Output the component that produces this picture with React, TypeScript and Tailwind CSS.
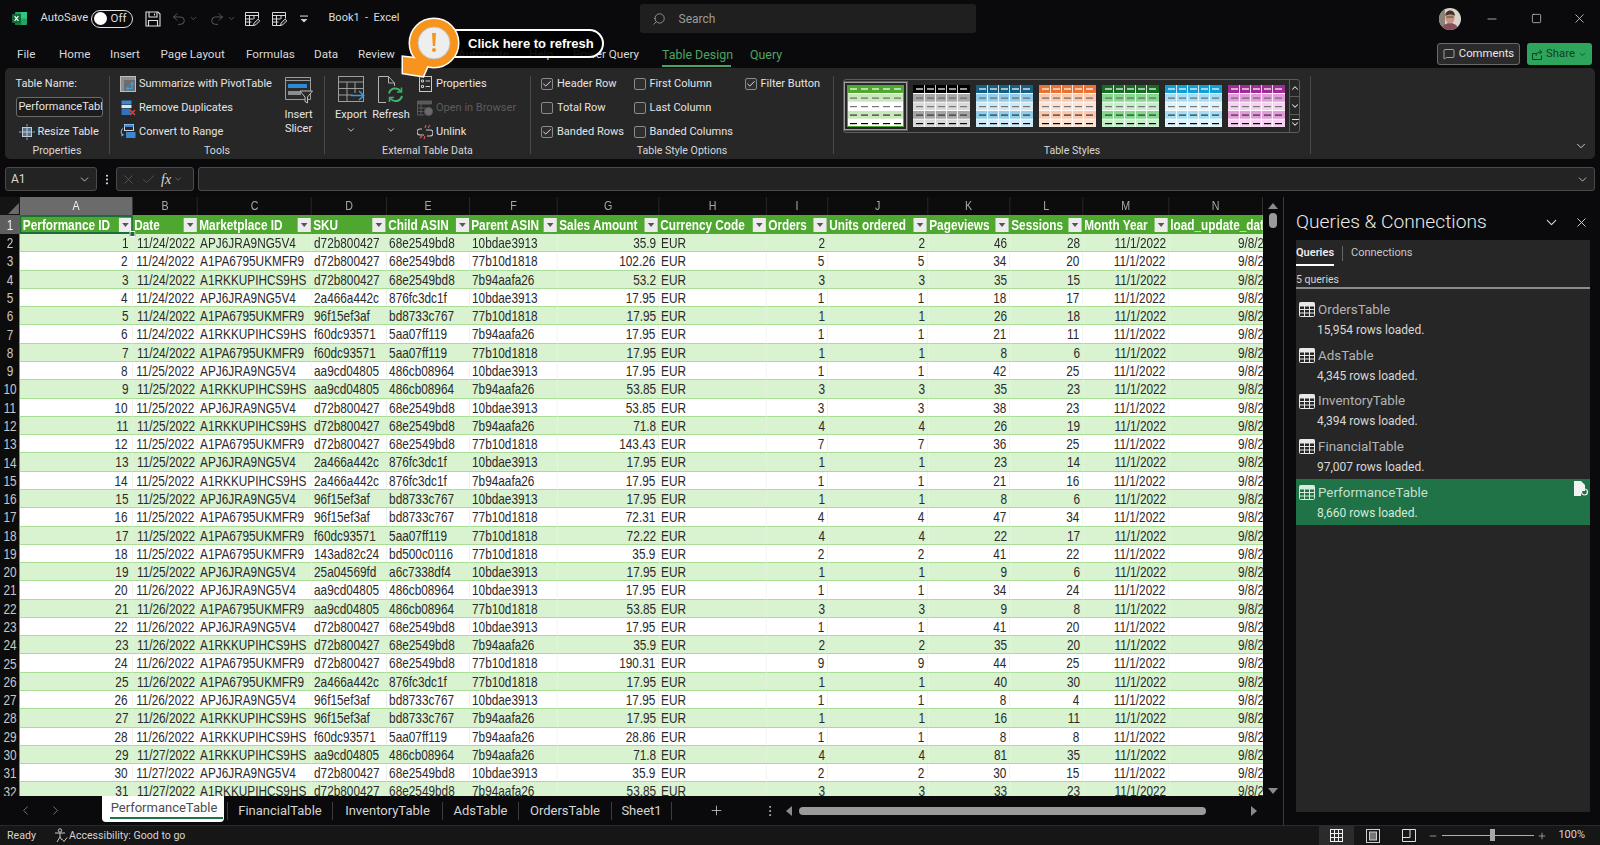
import React from "react";
import { ChevronDown, ChevronUp, Minus, Plus, Search, Square, X, MessageSquare, Check, EllipsisVertical, ChevronLeft, ChevronRight, Redo2, Undo2 } from "lucide-react";

// the sheet font is a narrow one, so the grid is laid out wider and squeezed with scale-x
const GRID_COLS =
  "grid grid-cols-[24.4px_137.8px_79.3px_139px_91.5px_101.2px_107.3px_123.2px_131.7px_74.4px_122px_100px_89px_104.9px_114.6px]";

const HEADERS = [
  "Performance ID", "Date", "Marketplace ID", "SKU", "Child ASIN", "Parent ASIN", "Sales Amount", "Currency Code",
  "Orders", "Units ordered", "Pageviews", "Sessions", "Month Year", "load_update_dat",
];
const LETTERS = ["A", "B", "C", "D", "E", "F", "G", "H", "I", "J", "K", "L", "M", "N"];

const AP = "APJ6JRA9NG5V4";
const A1 = "A1PA6795UKMFR9";
const AR = "A1RKKUPIHCS9HS";
const PA = "10bdae3913";
const PB = "77b10d1818";
const PC = "7b94aafa26";

// date, marketplace, sku, child, parent, sales, orders, pageviews, sessions
const ROWS: [string, string, string, string, string, string, string, string, string][] = [
  ["11/24/2022", AP, "d72b800427", "68e2549bd8", PA, "35.9", "2", "46", "28"],
  ["11/24/2022", A1, "d72b800427", "68e2549bd8", PB, "102.26", "5", "34", "20"],
  ["11/24/2022", AR, "d72b800427", "68e2549bd8", PC, "53.2", "3", "35", "15"],
  ["11/24/2022", AP, "2a466a442c", "876fc3dc1f", PA, "17.95", "1", "18", "17"],
  ["11/24/2022", A1, "96f15ef3af", "bd8733c767", PB, "17.95", "1", "26", "18"],
  ["11/24/2022", AR, "f60dc93571", "5aa07ff119", PC, "17.95", "1", "21", "11"],
  ["11/24/2022", A1, "f60dc93571", "5aa07ff119", PB, "17.95", "1", "8", "6"],
  ["11/25/2022", AP, "aa9cd04805", "486cb08964", PA, "17.95", "1", "42", "25"],
  ["11/25/2022", AR, "aa9cd04805", "486cb08964", PC, "53.85", "3", "35", "23"],
  ["11/25/2022", AP, "d72b800427", "68e2549bd8", PA, "53.85", "3", "38", "23"],
  ["11/25/2022", AR, "d72b800427", "68e2549bd8", PC, "71.8", "4", "26", "19"],
  ["11/25/2022", A1, "d72b800427", "68e2549bd8", PB, "143.43", "7", "36", "25"],
  ["11/25/2022", AP, "2a466a442c", "876fc3dc1f", PA, "17.95", "1", "23", "14"],
  ["11/25/2022", AR, "2a466a442c", "876fc3dc1f", PC, "17.95", "1", "21", "16"],
  ["11/25/2022", AP, "96f15ef3af", "bd8733c767", PA, "17.95", "1", "8", "6"],
  ["11/25/2022", A1, "96f15ef3af", "bd8733c767", PB, "72.31", "4", "47", "34"],
  ["11/25/2022", A1, "f60dc93571", "5aa07ff119", PB, "72.22", "4", "22", "17"],
  ["11/25/2022", A1, "143ad82c24", "bd500c0116", PB, "35.9", "2", "41", "22"],
  ["11/25/2022", AP, "25a04569fd", "a6c7338df4", PA, "17.95", "1", "9", "6"],
  ["11/26/2022", AP, "aa9cd04805", "486cb08964", PA, "17.95", "1", "34", "24"],
  ["11/26/2022", A1, "aa9cd04805", "486cb08964", PB, "53.85", "3", "9", "8"],
  ["11/26/2022", AP, "d72b800427", "68e2549bd8", PA, "17.95", "1", "41", "20"],
  ["11/26/2022", AR, "d72b800427", "68e2549bd8", PC, "35.9", "2", "35", "20"],
  ["11/26/2022", A1, "d72b800427", "68e2549bd8", PB, "190.31", "9", "44", "25"],
  ["11/26/2022", A1, "2a466a442c", "876fc3dc1f", PB, "17.95", "1", "40", "30"],
  ["11/26/2022", AP, "96f15ef3af", "bd8733c767", PA, "17.95", "1", "8", "4"],
  ["11/26/2022", AR, "96f15ef3af", "bd8733c767", PC, "17.95", "1", "16", "11"],
  ["11/26/2022", AR, "f60dc93571", "5aa07ff119", PC, "28.86", "1", "8", "8"],
  ["11/27/2022", AR, "aa9cd04805", "486cb08964", PC, "71.8", "4", "81", "35"],
  ["11/27/2022", AP, "d72b800427", "68e2549bd8", PA, "35.9", "2", "30", "15"],
  ["11/27/2022", AR, "d72b800427", "68e2549bd8", PC, "53.85", "3", "33", "23"],
];

const TABS = [
  { label: "File", w: "w-[42px]" },
  { label: "Home", w: "w-[51px]" },
  { label: "Insert", w: "w-[50.5px]" },
  { label: "Page Layout", w: "w-[85.5px]" },
  { label: "Formulas", w: "w-[68px]" },
  { label: "Data", w: "w-[44px]" },
  { label: "Review", w: "w-[100px]" },
  { label: "Automate", w: "w-[71px]" },
  { label: "Help", w: "w-[44px]" },
  { label: "Power Query", w: "w-[89px]" },
];

const SWATCHES = [
  { head: "#4ea72e", a: "#c9e9bc", b: "#ffffff", vert: "none", frame: "#4ea72e" },
  { head: "#000000", a: "#a6a6a6", b: "#d9d9d9", vert: "#ffffff", frame: "none" },
  { head: "#156082", a: "#8fcdea", b: "#cfe9f6", vert: "#ffffff", frame: "none" },
  { head: "#e97132", a: "#fbc9ae", b: "#fde3d6", vert: "#ffffff", frame: "none" },
  { head: "#196b24", a: "#82d98b", b: "#c6eecb", vert: "#ffffff", frame: "none" },
  { head: "#0f9ed5", a: "#a4def6", b: "#dff3fb", vert: "#ffffff", frame: "none" },
  { head: "#a02b93", a: "#e39cdb", b: "#f4d2f0", vert: "#ffffff", frame: "none" },
];

const Swatch = ({ s }: { s: (typeof SWATCHES)[number] }) => {
  const rows = [s.a, s.b, s.a, s.b];
  const xs = [2, 13, 24, 35, 46];
  return (
    <svg width="57" height="42" viewBox="0 0 57 42" className="shrink-0">
      <rect width="57" height="42" fill="#ffffff" />
      <rect width="57" height="8" fill={s.head} />
      {rows.map((c, i) => (
        <rect key={i} y={9 + i * 8.5} width="57" height="7.7" fill={c} />
      ))}
      {s.vert !== "none" &&
        [11, 22, 33, 44].map((x) => <rect key={x} x={x} y="0" width="0.8" height="42" fill={s.vert} />)}
      {xs.map((x) => (
        <g key={x}>
          <rect x={x + 1} y="3.4" width="7" height="1.2" fill="#ffffff" />
          <rect x={x + 1} y="12.5" width="7" height="1.2" fill="#6a6a6a" />
          <rect x={x + 1} y="21" width="7" height="1.2" fill="#777777" />
          <rect x={x + 1} y="29.5" width="7" height="1.2" fill="#333333" />
          <rect x={x + 1} y="38" width="7" height="1.2" fill="#000000" />
        </g>
      ))}
      {s.frame !== "none" && <rect x="0.5" y="0.5" width="56" height="41" fill="none" stroke={s.frame} />}
    </svg>
  );
};

const ExcelLogo = () => (
  <svg width="15" height="15" viewBox="0 0 15 15">
    <rect x="3" y="1" width="12" height="13" rx="1" fill="#21a366" />
    <rect x="9" y="1" width="6" height="6.5" fill="#33c481" />
    <rect x="3" y="7.5" width="6" height="6.5" fill="#107c41" />
    <rect x="0" y="3" width="9" height="9" rx="1" fill="#0e6b38" />
    <path d="M2.6 5.2 6.4 9.8M6.4 5.2 2.6 9.8" stroke="#fff" strokeWidth="1.2" />
  </svg>
);

const SaveIcon = () => (
  <svg width="16" height="16" viewBox="0 0 16 16" fill="none" stroke="#e0e0e0" strokeWidth="1.1">
    <path d="M1 1h12l2 2v12H1z" />
    <path d="M4 1v5h8V1M3.5 15V9.5h9V15" />
    <path d="M9.5 2.5v2" />
  </svg>
);

const SheetEditIcon = () => (
  <svg width="16" height="16" viewBox="0 0 16 16" fill="none" stroke="#d8d8d8" strokeWidth="1">
    <path d="M10 14.5H1.5v-13h13v6" />
    <path d="M1.5 4.5h13M1.5 8h8M1.5 11h6M5.5 4.5v10M10 4.5V8" />
    <path d="M9.5 14.5l.6-2.4 4-4 1.7 1.7-4 4z" fill="#222" />
  </svg>
);

const CustomizeIcon = () => (
  <svg width="10" height="10" viewBox="0 0 10 10" fill="#d0d0d0">
    <rect x="1" y="1.5" width="8" height="1.1" />
    <path d="M1.5 5h7L5 8.6z" />
  </svg>
);

const Avatar = () => (
  <svg width="22" height="22" viewBox="0 0 22 22">
    <defs>
      <clipPath id="av">
        <circle cx="11" cy="11" r="11" />
      </clipPath>
    </defs>
    <g clipPath="url(#av)">
      <rect width="22" height="22" fill="#d9d4cc" />
      <rect x="0" y="0" width="6" height="22" fill="#8c8078" />
      <path d="M3 22c0-5 4-7 8-7s8 2 8 7z" fill="#8a4f5f" />
      <ellipse cx="11" cy="10" rx="4.6" ry="5.6" fill="#c4957f" />
      <path d="M6.2 8c.3-4 2.5-5.5 5-5.5s4.5 1.5 4.8 5.5c-2-2-7.5-2-9.8 0z" fill="#43302a" />
      <rect x="7.5" y="8.5" width="7" height="1" fill="#5d4038" />
    </g>
  </svg>
);

const Summarize = () => (
  <svg width="16" height="16" viewBox="0 0 16 16">
    <rect x="0.5" y="0.5" width="15" height="15" fill="#6d6d6d" stroke="#bdbdbd" />
    <rect x="1" y="1" width="14" height="3" fill="#8e8e8e" />
    <rect x="1" y="4" width="3" height="11" fill="#8e8e8e" />
    <path d="M7 12.5h5V7M10.5 8.5l1.5-2 1.5 2M8.5 11 6.5 12.5 8.5 14" fill="none" stroke="#3aa0e8" strokeWidth="1.2" />
  </svg>
);

const RemoveDup = () => (
  <svg width="16" height="16" viewBox="0 0 16 16">
    <rect x="1.5" y="0.5" width="10" height="4" fill="#3b87d6" />
    <rect x="1.5" y="5" width="10" height="3" fill="#dfe6ee" />
    <rect x="1.5" y="8.5" width="9" height="6.5" fill="#2f74bd" />
    <path d="M10 10l5 5M15 10l-5 5" stroke="#e0413b" strokeWidth="1.5" />
  </svg>
);

const ConvertRange = () => (
  <svg width="16" height="16" viewBox="0 0 16 16" fill="none">
    <rect x="4.5" y="0.5" width="9" height="6" stroke="#d8d8d8" />
    <rect x="4.5" y="0.5" width="9" height="2.5" fill="#3b87d6" />
    <rect x="6" y="8" width="9.5" height="6" fill="#3b87d6" />
    <path d="M3 4.5C.5 6 .5 10 3 11.5M3 11.5l-1.8.2M3 11.5V9.8" stroke="#6cb4ee" strokeWidth="1.1" />
  </svg>
);

const ResizeIcon = () => (
  <svg width="16" height="16" viewBox="0 0 16 16" fill="none">
    <rect x="3.5" y="3.5" width="9" height="9" fill="#55708c" stroke="#c4cbd3" />
    <path d="M3.5 8h9M8 3.5v9" stroke="#c4cbd3" />
    <path d="M8 0v2.5M8 13.5V16M0 8h2.5M13.5 8H16" stroke="#6cb4ee" />
  </svg>
);

const SlicerIcon = () => (
  <svg width="28" height="27" viewBox="0 0 28 27" fill="none">
    <path d="M.5 .5h25v22H.5z" stroke="#9c9c9c" fill="#2a2a2a" />
    <path d="M.5 3.5h25" stroke="#9c9c9c" />
    <rect x="3" y="7" width="19" height="4" fill="#2d8ad8" />
    <rect x="3" y="14" width="13" height="4" fill="#8d8d8d" />
    <path d="M15 14h12.5l-5 6v6l-2.5-1.5V20z" fill="#2a2a2a" stroke="#bdbdbd" />
  </svg>
);

const ExportIcon = () => (
  <svg width="27" height="27" viewBox="0 0 27 27" fill="none" stroke="#9e9e9e">
    <rect x="0.5" y="0.5" width="25" height="25" />
    <path d="M.5 6h25M.5 12.5h25M.5 19h14M9 6v19.5M17 6v11" />
    <path d="M13 19.5h12.5M21 15l4.8 4.5-4.8 4.5" stroke="#3b9be0" strokeWidth="1.5" />
  </svg>
);

const RefreshIcon = () => (
  <svg width="26" height="28" viewBox="0 0 26 28" fill="none">
    <path d="M8 26.5H.5V.5h10l6 6.5v3" stroke="#b4b4b4" />
    <path d="M10.5 .5v6.5h6" stroke="#b4b4b4" />
    <path d="M11 17.5a6.5 6.5 0 0 1 11.5-2.5M24 20a6.5 6.5 0 0 1-11.5 2.5" stroke="#3fb36a" strokeWidth="2" />
    <path d="M23.5 11.5v4.5h-4.5M11.5 26v-4.5H16" stroke="#3fb36a" strokeWidth="1.5" />
  </svg>
);

const PropertiesIcon = () => (
  <svg width="13" height="16" viewBox="0 0 13 16" fill="none" stroke="#c8c8c8">
    <rect x="0.5" y="0.5" width="12" height="15" />
    <path d="M2.5 4h2v2h-2zM2.5 9.5h2v2h-2zM6.5 5h4.5M6.5 10.5h4.5" />
  </svg>
);

const BrowserIcon = () => (
  <svg width="16" height="16" viewBox="0 0 16 16" fill="#5a5a5a" stroke="#5a5a5a">
    <path d="M.5 1h14v3H.5z" />
    <path d="M.5 4v11h7M.5 8h8M.5 11.5h6M4 4v11" fill="none" />
    <circle cx="11.5" cy="11.5" r="4" fill="#6a6a6a" />
  </svg>
);

const UnlinkIcon = () => (
  <svg width="16" height="16" viewBox="0 0 16 16" fill="none">
    <path d="M5 5H3a3 3 0 0 0 0 6h4M9 6h4a3 3 0 0 1 0 6h-3" stroke="#c4c4c4" strokeWidth="1.2" />
    <path d="M9 1 8 4M13 1l-2 3M3 14l2-2M7 15l1-3" stroke="#e0524c" strokeWidth="1.2" />
  </svg>
);

const TableIcon = ({ color = "#e8e8e8" }: { color?: string }) => (
  <svg width="16" height="15" viewBox="0 0 16 15" fill="none" stroke={color} className="shrink-0">
    <rect x="0.5" y="0.5" width="15" height="14" rx="1" />
    <rect x="1" y="1" width="14" height="3" fill={color} />
    <path d="M1 7.5h14M1 11h14M5.5 4v10.5M10.5 4v10.5" />
  </svg>
);

const QueryDocIcon = () => (
  <svg width="14" height="15" viewBox="0 0 14 15">
    <path d="M0 0h7l4 4v6H7v5H0z" fill="#f2f2f2" />
    <circle cx="10.5" cy="11" r="3" fill="none" stroke="#f2f2f2" strokeWidth="1.2" />
  </svg>
);

const RibbonItem = ({ icon, children, dim }: { icon: React.ReactNode; children: React.ReactNode; dim?: boolean }) => (
  <div className={`flex h-[24px] items-center pt-[2px] ${dim ? "text-[#5c5c5c]" : "text-[#e4e4e4]"}`}>
    <span className="mr-[3px] flex w-[16px] shrink-0 justify-center">{icon}</span>
    <span className="whitespace-nowrap">{children}</span>
  </div>
);

const Check2 = ({ label, on }: { label: string; on?: boolean }) => (
  <div className="flex h-[24px] items-center gap-[4px] whitespace-nowrap pt-[2px] text-[#e4e4e4]">
    <span className="flex h-[12px] w-[12px] items-center justify-center rounded-[2px] border border-[#8a8a8a] bg-[#2e2e2e]">
      {on && <Check size={10} strokeWidth={2} color="#ffffff" />}
    </span>
    {label}
  </div>
);

const Group = ({ w, label, children }: { w: string; label: string; children: React.ReactNode }) => (
  <div className={`flex shrink-0 flex-col ${w}`}>
    <div className="flex h-[74px]">{children}</div>
    <div className="flex h-[16px] items-center justify-center text-[10.6px] text-[#d8d8d8]">{label}</div>
  </div>
);

const Sep = () => <div className="my-[5px] w-px shrink-0 bg-[#4a4a4a]" />;

const FilterBtn = () => (
  <span className="ml-auto mr-[1.5px] flex h-[14px] w-[16px] shrink-0 items-center justify-center bg-[#ececec]">
    <span className="h-0 w-0 border-x-[4px] border-t-[4px] border-x-transparent border-t-[#555]" />
  </span>
);

const Grid = () => (
  <div className="h-[599px] w-[1263px] shrink-0 overflow-hidden bg-white">
    <div className="w-[1540.2px] origin-top-left scale-x-[.82] [font-family:'Liberation_Sans',sans-serif] text-[14.4px] leading-[18px]">
      <div className={`${GRID_COLS} h-[18px] bg-[#0c0c0c] text-[13px] text-[#a8a8a8]`}>
        <div className="relative bg-[#141414]">
          <span className="absolute bottom-[1px] right-[1px] h-0 w-0 border-b-[11px] border-l-[13px] border-b-[#6a6a6a] border-l-transparent" />
        </div>
        {LETTERS.map((l, i) => (
          <div key={l} className={`flex items-center justify-center border-r border-[#2e2e2e] ${i === 0 ? "bg-[#6b6b6b] text-[#f0f0f0]" : ""}`}>
            {l}
          </div>
        ))}
      </div>
      <div className={`${GRID_COLS} h-[19px] bg-[#4ea72e] font-bold text-white`}>
        <div className="flex items-center justify-center bg-[#5e5e5e] font-normal text-[#f0f0f0]">1</div>
        {HEADERS.map((h, i) => (
          <div key={h} className={`relative flex items-center whitespace-nowrap ${i === 0 ? "z-10 pl-[3.5px]" : "overflow-hidden pl-[1.5px]"}`}>
            {h}
            {i < 13 && <FilterBtn />}
            {i === 0 && <span className="absolute inset-0 border-2 border-[#1c6b3a]" />}
            {i === 0 && <span className="absolute -bottom-[3px] -right-[3px] h-[6px] w-[7px] border border-white bg-[#1c6b3a]" />}
          </div>
        ))}
      </div>
      {ROWS.map((r, i) => {
        const band = i % 2 === 0;
        const cell = `h-[18.29px] overflow-hidden whitespace-nowrap border-b border-[#a8dd96] text-[#2a2a2a] ${band ? "bg-[#d9f2d0]" : "border-r-[#e6efe2] bg-white"}`;
        const vert = band ? "" : "border-r";
        const right = `${cell} ${vert} pr-[3.5px] text-right`;
        const left = `${cell} ${vert} pl-[2.5px]`;
        return (
          <div key={i} className={GRID_COLS}>
            <div className="flex h-[18.29px] items-center justify-center bg-[#0c0c0c] text-[#c8c8c8]">{i + 2}</div>
            <div className={`${cell} ${vert} pr-[5.5px] text-right`}>{i + 1}</div>
            <div className={right}>{r[0]}</div>
            <div className={left}>{r[1]}</div>
            <div className={left}>{r[2]}</div>
            <div className={left}>{r[3]}</div>
            <div className={left}>{r[4]}</div>
            <div className={right}>{r[5]}</div>
            <div className={left}>EUR</div>
            <div className={right}>{r[6]}</div>
            <div className={right}>{r[6]}</div>
            <div className={right}>{r[7]}</div>
            <div className={right}>{r[8]}</div>
            <div className={right}>11/1/2022</div>
            <div className={`${cell} pl-[84px]`}>9/8/2023</div>
          </div>
        );
      })}
    </div>
  </div>
);

const SheetTabs = () => (
  <div className="flex h-[29px] items-start text-[13px] text-[#d4d4d4]">
    <div className="flex h-[29px] w-[102px] items-center pl-[18px] text-[#777]">
      <ChevronLeft size={15} strokeWidth={1.5} />
      <ChevronRight size={15} strokeWidth={1.5} className="ml-[15px]" />
    </div>
    <div className="relative flex h-[26px] w-[122px] justify-center rounded-b-[4px] bg-white pl-[2px] pt-[2px] text-[13px] leading-[20px] text-[#4d4d4d]">
      PerformanceTable
      <span className="absolute bottom-[3px] left-[8px] right-[1px] h-[2px] bg-[#217346]" />
    </div>
    <div className="mt-[6px] h-[18px] w-[4px] shrink-0 border-r border-[#3c3c3c]" />
    {[
      { label: "FinancialTable", w: "w-[105px]" },
      { label: "InventoryTable", w: "w-[110px]" },
      { label: "AdsTable", w: "w-[76px]" },
      { label: "OrdersTable", w: "w-[93px]" },
      { label: "Sheet1", w: "w-[60px]" },
    ].map((t) => (
      <div key={t.label} className={`mt-[6px] flex h-[18px] items-center justify-center border-r border-[#3c3c3c] ${t.w}`}>
        {t.label}
      </div>
    ))}
    <div className="flex h-[29px] w-[88px] items-center justify-center">
      <Plus size={15} strokeWidth={1.25} />
    </div>
    <div className="flex h-[29px] w-[20px] items-center justify-center text-[#bbb]">
      <EllipsisVertical size={14} strokeWidth={1.5} />
    </div>
    <div className="flex h-[29px] w-[491px] items-center pl-[6px]">
      <span className="h-0 w-0 border-y-[5px] border-r-[6px] border-y-transparent border-r-[#8a8a8a]" />
      <div className="ml-[7px] h-[8px] w-[407px] rounded-full bg-[#9a9a9a]" />
      <span className="ml-[45px] h-0 w-0 border-y-[5px] border-l-[6px] border-y-transparent border-l-[#8a8a8a]" />
    </div>
  </div>
);

const QUERIES = [
  { name: "OrdersTable", sub: "15,954 rows loaded." },
  { name: "AdsTable", sub: "4,345 rows loaded." },
  { name: "InventoryTable", sub: "4,394 rows loaded." },
  { name: "FinancialTable", sub: "97,007 rows loaded." },
  { name: "PerformanceTable", sub: "8,660 rows loaded.", active: true },
];

const Panel = () => (
  <div className="flex flex-1 flex-col border-l border-[#3a3a3a] pl-[12px] pr-[10px]">
    <div className="flex h-[43px] items-center pt-[7px] text-[19.2px] font-light text-[#ececec]">
      Queries &amp; Connections
      <ChevronDown size={17} strokeWidth={1.5} className="ml-auto mr-[14px] text-[#d8d8d8]" />
      <X size={15} strokeWidth={1.5} className="mr-[1.5px] text-[#d8d8d8]" />
    </div>
    <div className="h-[572px] bg-[#262626]">
      <div className="flex h-[25px] items-center pt-[1px] text-[11px]">
        <span className="relative flex h-[25px] w-[38px] items-center font-semibold text-[#ececec]">
          Queries
          <span className="absolute bottom-0 left-0 right-0 h-[2px] bg-white" />
        </span>
        <span className="ml-[8px] h-[15px] w-px bg-[#666]" />
        <span className="ml-[8px] text-[#c8c8c8]">Connections</span>
      </div>
      <div className="flex h-[24px] items-center border-b-2 border-[#8c8c8c] pt-[8px] text-[10.5px] text-[#d4d4d4]">5 queries</div>
      <div className="pt-[7.5px]">
        {QUERIES.map((q) => (
          <div
            key={q.name}
            className={`flex h-[45.7px] flex-col justify-center pl-[3px] ${q.active ? "relative bg-[#1f7346] text-[#d9eadf]" : "text-[#d8d8d8]"}`}
          >
            <div className={`flex items-center gap-[3px] text-[13.4px] leading-[18px] ${q.active ? "text-[#c8dfd0]" : "text-[#b4b4b4]"}`}>
              <TableIcon color={q.active ? "#d8ecdf" : "#e8e8e8"} />
              {q.name}
            </div>
            <div className="mt-[3px] pl-[18px] text-[12px] leading-[16px]">{q.sub}</div>
            {q.active && (
              <span className="absolute right-[2px] top-[2px]">
                <QueryDocIcon />
              </span>
            )}
          </div>
        ))}
      </div>
    </div>
  </div>
);

const StatusBar = () => (
  <div className="flex h-[20px] items-center border-t border-[#2a2a2a] bg-[#161616] text-[10.6px] text-[#d4d4d4]">
    <span className="ml-[7px] w-[46px]">Ready</span>
    <svg width="16" height="15" viewBox="0 0 16 15" fill="none" stroke="#c8c8c8">
      <circle cx="7" cy="2.5" r="1.7" />
      <path d="M2 5h10M7 5v4M7 9l-3 5M7 9l2 3M9.5 11.5l1.5 2 3-4" />
    </svg>
    <span>Accessibility: Good to go</span>
    <div className="ml-auto flex h-full items-center">
      <span className="flex h-[20px] w-[35px] items-center justify-center bg-[#2b2b2b]">
        <svg width="13" height="13" viewBox="0 0 13 13" fill="none" stroke="#f0f0f0">
          <rect x="0.5" y="0.5" width="12" height="12" />
          <path d="M.5 4.5h12M.5 8.5h12M4.5 .5v12M8.5 .5v12" />
        </svg>
      </span>
      <span className="flex h-[20px] w-[37px] items-center justify-center">
        <svg width="14" height="14" viewBox="0 0 14 14" fill="none" stroke="#d0d0d0">
          <rect x="0.5" y="0.5" width="13" height="13" />
          <rect x="3.5" y="3" width="7" height="8" fill="#777" />
        </svg>
      </span>
      <span className="flex h-[20px] w-[36px] items-center justify-center">
        <svg width="14" height="13" viewBox="0 0 14 13" fill="none" stroke="#e0e0e0">
          <path d="M.5 .5h13v12H.5zM.5 8.5h7.5V.5" />
        </svg>
      </span>
      <Minus size={10} strokeWidth={1.5} className="ml-[1px]" />
      <div className="relative ml-[4px] h-px w-[92px] bg-[#b0b0b0]">
        <span className="absolute left-[48px] top-[-6px] h-[12px] w-[5px] bg-[#a8a8a8]" />
      </div>
      <Plus size={10} strokeWidth={1.5} className="ml-[3px]" />
      <span className="ml-[11px] mr-[15px] text-[11px]">100%</span>
    </div>
  </div>
);

// orange pin with the pill next to it, sits over the tabs
const Callout = () => (
  <>
    <div className="absolute left-[453px] top-[29px] flex h-[29px] w-[151px] items-center rounded-r-full border-2 border-white bg-black/90 pl-[13px] [font-family:'Liberation_Sans',sans-serif] text-[13px] font-bold text-white">
      Click here to refresh
    </div>
    <svg width="64" height="66" viewBox="398 15 64 66" className="absolute left-[398px] top-[15px]">
      <g stroke="#ffffff" strokeWidth="3" fill="#ffffff">
        <circle cx="434" cy="43" r="24" />
        <path d="M403 57 403 73 423 76 430 60z" />
      </g>
      <circle cx="434" cy="43" r="24" fill="#f7941d" />
      <path d="M403 57 403 73 423 76 430 60z" fill="#f7941d" />
      <circle cx="434" cy="43" r="16" fill="#eeeeee" stroke="#c2c2c2" />
      <path d="M432 33h4l-.8 13h-2.4z" fill="#f7941d" />
      <circle cx="434" cy="50" r="2" fill="#f7941d" />
    </svg>
  </>
);

const App = () => {
  return (
    <div className="relative flex h-[845px] w-[1600px] flex-col overflow-hidden bg-[#0a0a0c] text-[12px] [font-family:'Roboto',sans-serif]">
      {/* title bar */}
      <div className="flex h-[37px] shrink-0 items-center text-[#dcdcdc]">
        <span className="ml-[12px] w-[28.5px]">
          <ExcelLogo />
        </span>
        <span className="w-[50px] text-[11.3px]">AutoSave</span>
        <div className="flex h-[18px] w-[42px] items-center rounded-full border border-[#e0e0e0] pl-[2px] text-[11.5px]">
          <span className="h-[13px] w-[13px] rounded-full bg-white" />
          <span className="ml-[4px]">Off</span>
        </div>
        <span className="ml-[12px]">
          <SaveIcon />
        </span>
        <Undo2 size={16} strokeWidth={1.25} className="ml-[10px] text-[#666]" />
        <ChevronDown size={9} className="ml-[2px] text-[#666]" />
        <Redo2 size={16} strokeWidth={1.25} className="ml-[11px] text-[#666]" />
        <ChevronDown size={9} className="ml-[2px] text-[#666]" />
        <span className="ml-[8px]">
          <SheetEditIcon />
        </span>
        <span className="ml-[11px]">
          <SheetEditIcon />
        </span>
        <span className="ml-[12px]">
          <CustomizeIcon />
        </span>
        <span className="ml-[20px] w-[311px] whitespace-nowrap text-[11px]">Book1 &nbsp;-&nbsp; Excel</span>
        <div className="flex h-[29px] w-[336px] items-center rounded-[3px] bg-[#1f1f1f] pl-[12px] text-[#9c9c9c]">
          <Search size={14} strokeWidth={1.5} className="-scale-x-100" />
          <span className="ml-[13px]">Search</span>
        </div>
        <span className="ml-[463px]">
          <Avatar />
        </span>
        <Minus size={14} strokeWidth={1.25} className="ml-[24px]" />
        <Square size={11} strokeWidth={1.5} className="ml-[32px]" />
        <X size={15} strokeWidth={1.25} className="ml-[30px]" />
      </div>

      {/* tabs */}
      <div className="flex h-[31px] shrink-0 items-center pl-[17px] pt-[5px] text-[11.7px] text-[#d8d8d8]">
        {TABS.map((t) => (
          <span key={t.label} className={`whitespace-nowrap ${t.w}`}>
            {t.label}
          </span>
        ))}
        <span className="relative w-[88px] text-[12.4px] text-[#4aa564]">
          Table Design
          <span className="absolute -bottom-[3px] left-0 h-[2px] w-[69px] bg-[#4aa564]" />
        </span>
        <span className="text-[12.4px] text-[#4aa564]">Query</span>
        <div className="ml-auto mr-[8px] mb-[2px] flex items-center gap-[7px] text-[11.3px]">
          <div className="flex h-[22px] w-[83px] items-center justify-center gap-[4px] rounded-[3px] border border-[#6a6a6a] bg-[#2a2a2a] text-[#e8e8e8]">
            <MessageSquare size={12} strokeWidth={1.25} />
            Comments
          </div>
          <div className="flex h-[22px] w-[65px] items-center justify-center gap-[3px] rounded-[3px] bg-[#2ea55c] text-[#123d22]">
            <svg width="11" height="11" viewBox="0 0 11 11" fill="none" stroke="#123d22">
              <path d="M.5 4.5h4M.5 4.5v6h9v-4M4 7c0-3 2-4 5-4M7.5 1 9.8 3 7.5 5" />
            </svg>
            Share
            <ChevronDown size={9} />
          </div>
        </div>
      </div>

      {/* ribbon */}
      <div className="mx-[5px] flex h-[91px] shrink-0 rounded-[5px] bg-[#272727] pt-[3px] text-[11px] text-[#e4e4e4]">
        <Group w="w-[104px]" label="Properties">
          <div className="pl-[10.5px]">
            <div className="flex h-[24px] items-center pt-[2px]">Table Name:</div>
            <div className="mt-[2px] flex h-[20px] w-[87px] items-center overflow-hidden whitespace-nowrap rounded-[3px] border border-[#6a6a6a] bg-[#1c1c1c] pl-[2px]">
              PerformanceTabl
            </div>
            <div className="mt-[2px] pl-[3px]">
              <RibbonItem icon={<ResizeIcon />}>Resize Table</RibbonItem>
            </div>
          </div>
        </Group>
        <Sep />
        <Group w="w-[214px]" label="Tools">
          <div className="w-[175px] pl-[10px]">
            <RibbonItem icon={<Summarize />}>Summarize with PivotTable</RibbonItem>
            <RibbonItem icon={<RemoveDup />}>Remove Duplicates</RibbonItem>
            <RibbonItem icon={<ConvertRange />}>Convert to Range</RibbonItem>
          </div>
          <div className="flex w-[27px] flex-col items-center pt-[6px] leading-[14px]">
            <SlicerIcon />
            <span className="mt-[4px] text-center">
              Insert
              <br />
              Slicer
            </span>
          </div>
        </Group>
        <Sep />
        <Group w="w-[205px]" label="External Table Data">
          <div className="ml-[8px] flex w-[36px] flex-col items-center pt-[5px]">
            <ExportIcon />
            <span className="mt-[4px]">Export</span>
            <ChevronDown size={10} className="mt-[1px]" />
          </div>
          <div className="flex w-[44px] flex-col items-center pt-[5px]">
            <RefreshIcon />
            <span className="mt-[3px]">Refresh</span>
            <ChevronDown size={10} className="mt-[1px]" />
          </div>
          <div className="ml-[4px]">
            <RibbonItem icon={<PropertiesIcon />}>Properties</RibbonItem>
            <RibbonItem icon={<BrowserIcon />} dim>
              Open in Browser
            </RibbonItem>
            <RibbonItem icon={<UnlinkIcon />}>Unlink</RibbonItem>
          </div>
        </Group>
        <Sep />
        <Group w="w-[302px]" label="Table Style Options">
          <div className="w-[102.5px] pl-[10px]">
            <Check2 label="Header Row" on />
            <Check2 label="Total Row" />
            <Check2 label="Banded Rows" on />
          </div>
          <div className="w-[111px]">
            <Check2 label="First Column" />
            <Check2 label="Last Column" />
            <Check2 label="Banded Columns" />
          </div>
          <div>
            <Check2 label="Filter Button" on />
          </div>
        </Group>
        <Sep />
        <Group w="w-[476px]" label="Table Styles">
          <div className="ml-[9px] mt-[8px] flex h-[54px] w-[457px] items-center rounded-[3px] border border-[#5c5c5c] pl-[3px]">
            <div className="flex gap-[6px]">
              {SWATCHES.map((s, i) => (
                <div key={i} className={i === 0 ? "-m-[3px] mr-[0px] border border-[#a0a0a0] p-[2px] outline outline-[#5c5c5c]" : ""}>
                  <Swatch s={s} />
                </div>
              ))}
            </div>
            <div className="ml-[4px] flex h-[54px] w-[14px] flex-col border-l border-[#5c5c5c] text-[#e0e0e0]">
              <span className="flex h-[18px] items-center justify-center border-b border-[#5c5c5c]">
                <ChevronUp size={10} strokeWidth={2.5} />
              </span>
              <span className="flex h-[18px] items-center justify-center border-b border-[#5c5c5c]">
                <ChevronDown size={10} strokeWidth={2.5} />
              </span>
              <span className="flex h-[18px] flex-col items-center justify-center">
                <span className="h-px w-[7px] bg-[#e0e0e0]" />
                <ChevronDown size={10} strokeWidth={2.5} className="-mt-[1px]" />
              </span>
            </div>
          </div>
        </Group>
        <Sep />
        <div className="flex flex-1 items-end justify-end pb-[6px] pr-[7px]">
          <ChevronDown size={14} strokeWidth={1.5} />
        </div>
      </div>

      {/* formula bar */}
      <div className="mt-[8px] flex h-[24px] shrink-0 items-center px-[5px] text-[#d8d8d8]">
        <div className="flex h-[24px] w-[92px] items-center justify-between rounded-[3px] border border-[#4a4a4a] bg-[#232323] pl-[5px] pr-[5px] text-[12px]">
          A1
          <ChevronDown size={13} strokeWidth={1.5} />
        </div>
        <EllipsisVertical size={13} className="ml-[3px] mr-[2px] w-[14px]" />
        <div className="flex h-[24px] w-[78px] items-center rounded-[3px] border border-[#4a4a4a] bg-[#232323] pl-[4px] text-[#6c6c6c]">
          <X size={15} strokeWidth={1} />
          <Check size={15} strokeWidth={1} className="ml-[5px]" />
          <span className="ml-[5px] font-['Liberation_Serif'] text-[14px] italic text-[#d8d8d8]">fx</span>
          <ChevronDown size={10} className="ml-[2px]" />
        </div>
        <div className="ml-[4px] flex h-[24px] flex-1 items-center justify-end rounded-[3px] border border-[#4a4a4a] bg-[#232323] pr-[5px]">
          <ChevronDown size={13} strokeWidth={1.5} />
        </div>
      </div>

      {/* sheet area */}
      <div className="mt-[6px] flex min-h-0 flex-1">
        <div className="flex w-[1283px] shrink-0 flex-col">
          <div className="flex">
            <Grid />
            <div className="flex h-[599px] w-[20px] flex-col items-center pt-[6px] text-[#8a8a8a]">
              <span className="h-0 w-0 border-x-[5px] border-b-[6px] border-x-transparent border-b-[#8a8a8a]" />
              <span className="mt-[4px] h-[15px] w-[8px] rounded-full bg-[#9a9a9a]" />
              <span className="mb-[2px] mt-auto h-0 w-0 border-x-[5px] border-t-[6px] border-x-transparent border-t-[#8a8a8a]" />
            </div>
          </div>
          <SheetTabs />
        </div>
        <Panel />
      </div>

      <StatusBar />
      <Callout />
    </div>
  );
};

export default App;
